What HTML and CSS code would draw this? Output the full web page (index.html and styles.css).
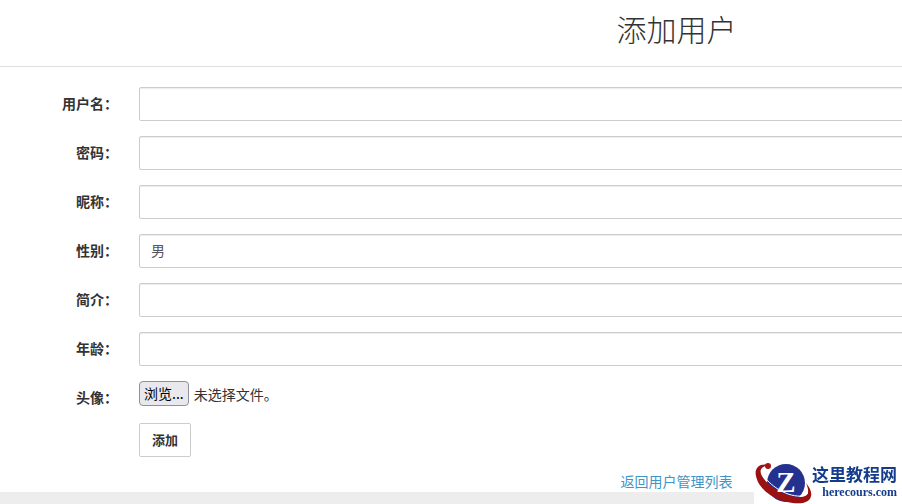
FILE: index.html
```
<!DOCTYPE html>
<html lang="zh-CN">
  <head>
    <meta charset="UTF-8" />
    <meta name="viewport" content="width=device-width, initial-scale=1.0" />
    <title>添加用户</title>
    <link rel="stylesheet" href="styles.css">
  </head>
  <body>
    <div class="page">
      <header class="page-header">
        <h1>添加用户</h1>
      </header>
      <form class="user-form" id="userForm">
        <div class="form-group">
          <label for="username">用户名：</label>
          <input class="form-control" type="text" id="username" />
        </div>
        <div class="form-group">
          <label for="password">密码：</label>
          <input class="form-control" type="password" id="password" />
        </div>
        <div class="form-group">
          <label for="nickname">昵称：</label>
          <input class="form-control" type="text" id="nickname" />
        </div>
        <div class="form-group">
          <label for="sex">性别：</label>
          <select class="form-control" id="sex">
            <option>男</option>
            <option>女</option>
          </select>
        </div>
        <div class="form-group">
          <label for="intro">简介：</label>
          <input class="form-control" type="text" id="intro" />
        </div>
        <div class="form-group">
          <label for="age">年龄：</label>
          <input class="form-control" type="text" id="age" />
        </div>
        <div class="form-group">
          <label for="avatar">头像：</label>
          <div class="file-field">
            <input type="file" id="avatar" hidden />
            <button type="button" class="browse-btn" id="browse">浏览...</button>
            <span id="fileName">未选择文件。</span>
          </div>
        </div>
        <div class="form-group">
          <span></span>
          <button type="submit" class="submit-btn">添加</button>
        </div>
      </form>
      <p class="back"><a href="#">返回用户管理列表</a></p>
    </div>
    <div class="site-logo">
      <svg class="logo-mark" viewBox="0 0 58 42" aria-hidden="true">
        <circle cx="32" cy="21" r="19" fill="#25318f" />
        <path d="M14 3C6 1 0 6 2 14C4 25 16 36 33 40C46 43 56 41 57 34C58 30 56 26 52 21C55 28 55 32 51 34C44 37 28 33 17 24C9 17 4 10 8 6C10 4 12 4 14 5Z" fill="#9b1010" />
        <path d="M8 8C8 15 20 27 34 32C43 35 51 35 54 31" fill="none" stroke="#fff" stroke-width="1" />
        <circle cx="14" cy="4" r="3" fill="#a51515" />
        <text class="logo-z" x="32" y="30" text-anchor="middle">Z</text>
      </svg>
      <div class="logo-text">
        <span class="logo-name">这里教程网</span>
        <span class="logo-domain">herecours.com</span>
      </div>
    </div>
    <script>
      const avatar = document.getElementById("avatar");
      const fileName = document.getElementById("fileName");

      document.getElementById("browse").addEventListener("click", () => {
        avatar.click();
      });

      avatar.addEventListener("change", () => {
        fileName.textContent = avatar.files.length
          ? avatar.files[0].name
          : "未选择文件。";
      });
    </script>
  </body>
</html>
```
FILE: styles.css
```
* {
  box-sizing: border-box;
}
body {
  margin: 0;
  background: #ededed;
  color: #333;
  font-family: "Noto Sans CJK SC", sans-serif;
  font-size: 14px;
  line-height: 20px;
  overflow: hidden;
}
/* the form is wider than the window and runs off its right side */
.page {
  width: 150%;
  background: #fff;
}
.page-header {
  padding: 10px 0 20px;
  border-bottom: 1px solid #ddd;
  text-align: center;
}
h1 {
  margin: 0;
  font-size: 30px;
  font-weight: 300;
  line-height: 36px;
}
.user-form {
  display: grid;
  gap: 15px;
  padding: 20px 20px 14px 0;
}
.form-group {
  display: grid;
  grid-template-columns: 118px 1fr;
  column-gap: 21px;
  align-items: start;
}
label {
  padding-top: 6px;
  padding-bottom: 1px;
  font-weight: bold;
  text-align: right;
}
.form-control {
  width: 100%;
  height: 34px;
  padding: 6px 12px;
  border: 1px solid #ccc;
  border-radius: 2px;
  background: #fff;
  box-shadow: inset 0 1px 1px rgba(0, 0, 0, 0.075);
  color: #555;
  font: inherit;
}
select.form-control {
  padding: 0 7px 2px;
}
.file-field {
  display: flex;
  align-items: center;
  gap: 5px;
  line-height: 18px;
}
.browse-btn {
  height: 25px;
  padding: 0 4px 2px;
  border: 1px solid #8f8f9d;
  border-radius: 4px;
  background: #e9e9ed;
  color: #000;
  font: inherit;
}
.submit-btn {
  justify-self: start;
  height: 34px;
  padding: 6px 12px;
  border: 1px solid #ccc;
  border-radius: 2px;
  background: #fff;
  color: #333;
  font: inherit;
  font-size: 13px;
  font-weight: bold;
}
button {
  cursor: pointer;
}
.back {
  margin: 0;
  padding-bottom: 1px;
  text-align: center;
}
.back a {
  color: #3c96c8;
  text-decoration: none;
}
/* logo in the corner of the window, over the page */
.site-logo {
  position: fixed;
  right: 0;
  bottom: 0;
  display: flex;
  align-items: center;
  padding-right: 5px;
  background: #fff;
}
.logo-mark {
  width: 58px;
  height: 42px;
}
.logo-z {
  fill: #fff;
  font: bold 29px "Liberation Serif", serif;
}
.logo-text {
  display: flex;
  flex-direction: column;
  align-items: flex-end;
  padding-bottom: 2px;
  color: #143c8c;
  font-weight: bold;
}
.logo-name {
  font-size: 17px;
  line-height: 20px;
}
.logo-domain {
  font-family: "Liberation Serif", serif;
  font-size: 12px;
  line-height: 16px;
}
```
